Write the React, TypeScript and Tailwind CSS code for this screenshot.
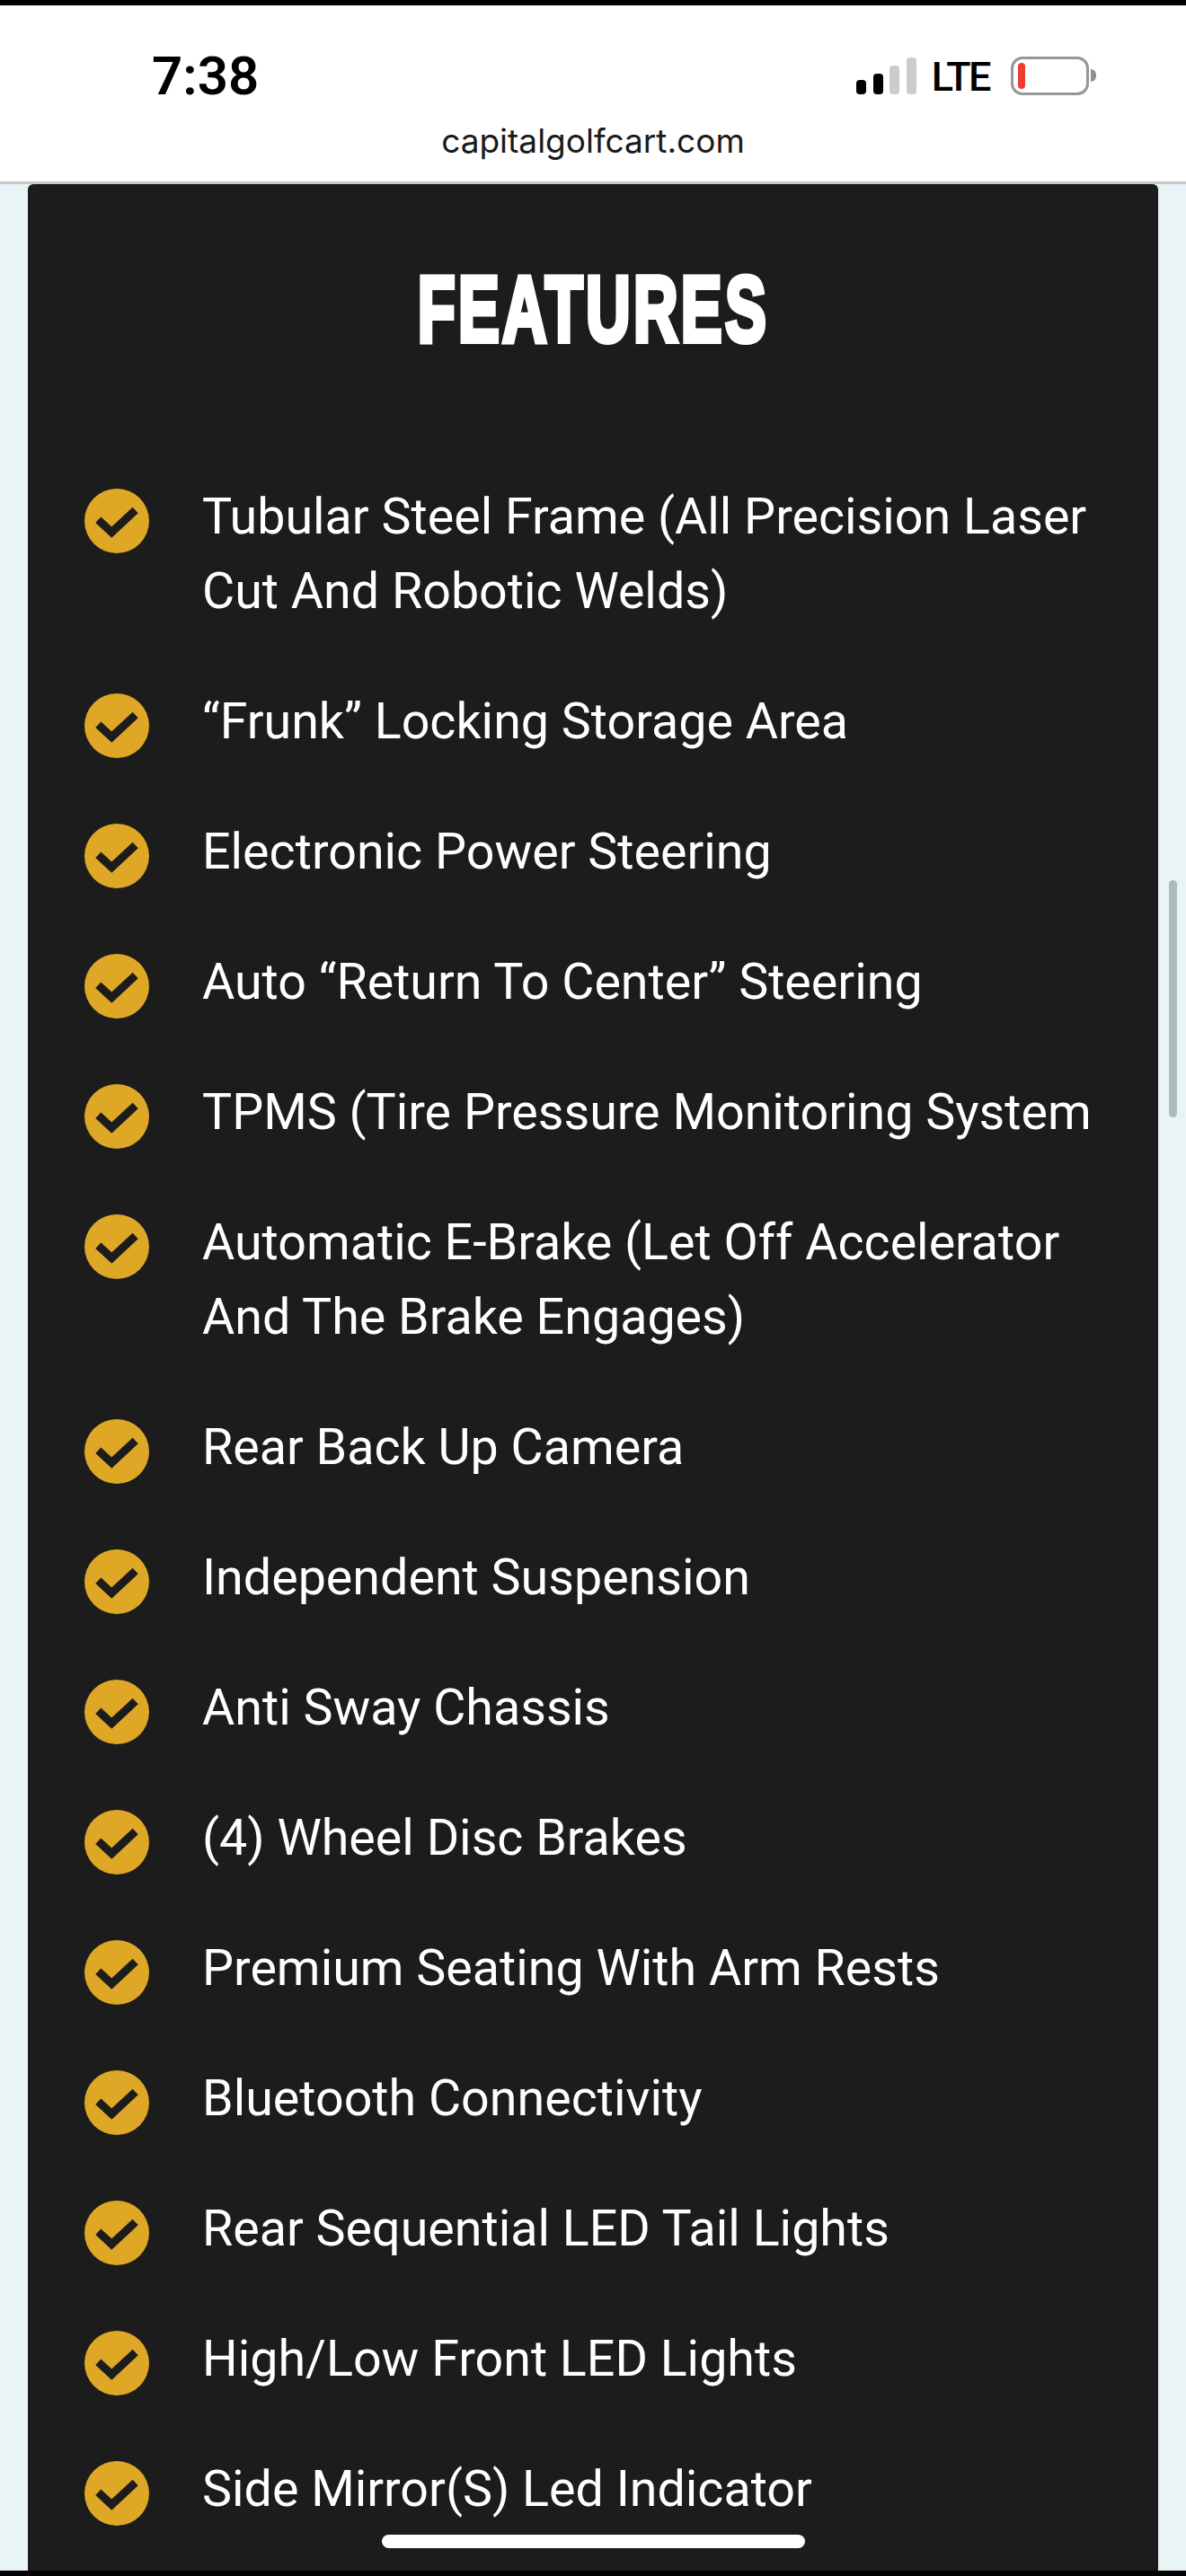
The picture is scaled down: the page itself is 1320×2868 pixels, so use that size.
import { Fragment } from 'react'

const features = [
  ['Tubular Steel Frame (All Precision Laser', 'Cut And Robotic Welds)'],
  ['“Frunk” Locking Storage Area'],
  ['Electronic Power Steering'],
  ['Auto “Return To Center” Steering'],
  ['TPMS (Tire Pressure Monitoring System'],
  ['Automatic E-Brake (Let Off Accelerator', 'And The Brake Engages)'],
  ['Rear Back Up Camera'],
  ['Independent Suspension'],
  ['Anti Sway Chassis'],
  ['(4) Wheel Disc Brakes'],
  ['Premium Seating With Arm Rests'],
  ['Bluetooth Connectivity'],
  ['Rear Sequential LED Tail Lights'],
  ['High/Low Front LED Lights'],
  ['Side Mirror(S) Led Indicator'],
]

function CheckBadge() {
  return (
    <svg viewBox="0 0 72 72" className="w-[72px] h-[72px] shrink-0">
      <circle cx="36" cy="36" r="36" fill="#dea726" />
      <path d="M15.3 34.7 L30.3 48.5 L56.7 24" fill="none" stroke="#1c1c1c" strokeWidth="9" strokeLinejoin="miter" />
    </svg>
  )
}

function StatusBar() {
  return (
    <div className="flex items-start justify-between h-[92px] pl-[169px] pr-[100px] pt-[48px]">
      <span className="text-[60px] leading-[62px] font-semibold text-black">7:38</span>
      <div className="flex items-center gap-[17px] h-[46px] mt-[7px]">
        <div className="flex items-end gap-[7.5px] h-[41px]">
          <span className="w-[11px] h-[16px] rounded-[4px] bg-black" />
          <span className="w-[11px] h-[23px] rounded-[4px] bg-black" />
          <span className="w-[11px] h-[32px] rounded-[4px] bg-[#cccccc]" />
          <span className="w-[11px] h-[41px] rounded-[4px] bg-[#cccccc]" />
        </div>
        <span className="mr-[7px] pt-[3px] text-[45px] leading-[46px] font-medium tracking-[-2.5px] text-black">LTE</span>
        <div className="flex items-center gap-[2px]">
          <div className="w-[87px] h-[43px] rounded-[13px] border-[3px] border-[#979797] px-[5px] py-[4px]">
            <div className="w-[8px] h-full rounded-[4px] bg-[#f23b2f]" />
          </div>
          <span className="w-[6px] h-[14px] rounded-r-full bg-[#8f8f8f]" />
        </div>
      </div>
    </div>
  )
}

export default function App() {
  return (
    <div className="relative w-[1320px] h-[2868px] overflow-hidden bg-[#e8f4f5] font-['Roboto',sans-serif]">
      <div className="h-[6px] bg-black" />
      <header className="h-[199px] bg-white border-b-[3px] border-[#c9c9c9]">
        <StatusBar />
        <p className="mt-[36px] text-center text-[37px] leading-[46px] text-[#1a1a1a] font-['Inter',sans-serif]">
          capitalgolfcart.com
        </p>
      </header>

      <main className="mx-[31px] h-[2663px] rounded-t-[6px] bg-[#1c1c1c] text-white pt-[79px]">
        <h1 className="text-center text-[104px] leading-[120px] font-bold font-['Liberation_Sans',sans-serif]">
          {/* heavy condensed heading face, squeezed from the bold sans */}
          <span className="inline-block scale-x-[0.66] tracking-[5px] [-webkit-text-stroke:6px_white]">FEATURES</span>
        </h1>
        <ul className="mt-[130px] flex flex-col gap-[62px] pl-[63px]">
          {features.map((lines) => (
            <li key={lines[0]} className="flex gap-[59px]">
              <div className="h-[83px] pt-[10px] shrink-0">
                <CheckBadge />
              </div>
              <p className="text-[55.6px] leading-[83px] whitespace-nowrap">
                {lines.map((line, i) => (
                  <Fragment key={line}>
                    {i > 0 && <br />}
                    {line}
                  </Fragment>
                ))}
              </p>
            </li>
          ))}
        </ul>
      </main>

      {/* page scrollbar thumb */}
      <div className="absolute left-[1301px] top-[980px] w-[9px] h-[264px] rounded-full bg-[#adbabc]" />
      {/* home indicator and bottom edge */}
      <div className="absolute left-[425px] top-[2822px] w-[471px] h-[15px] rounded-full bg-white" />
      <div className="absolute left-0 right-0 bottom-0 h-[6px] bg-black" />
    </div>
  )
}
